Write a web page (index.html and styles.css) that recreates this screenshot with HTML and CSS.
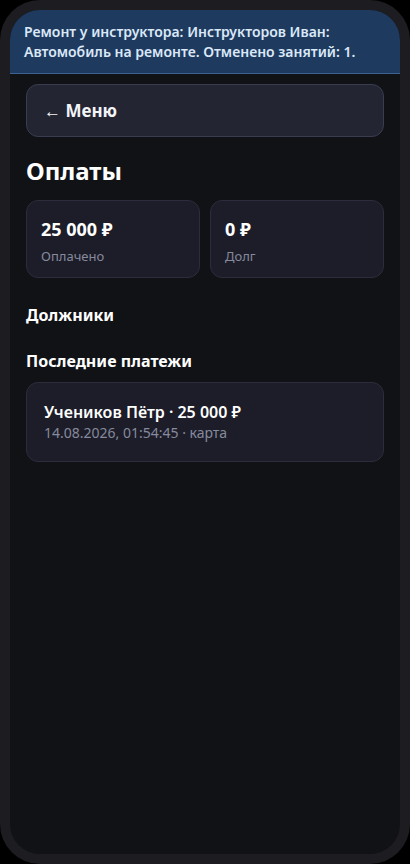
FILE: index.html
```html
<!DOCTYPE html>
<html lang="ru">
<head>
<meta charset="utf-8">
<link rel="stylesheet" href="styles.css">
</head>
<body>
<div class="phone">
  <div class="screen">
    <div class="banner">Ремонт у инструктора: Инструкторов Иван: Автомобиль на ремонте. Отменено занятий: 1.</div>
    <div class="content">
      <button class="menu-btn">← Меню</button>
      <h1 class="title">Оплаты</h1>
      <div class="stats">
        <div class="card stat">
          <div class="stat-value">25 000 ₽</div>
          <div class="stat-label">Оплачено</div>
        </div>
        <div class="card stat">
          <div class="stat-value">0 ₽</div>
          <div class="stat-label">Долг</div>
        </div>
      </div>
      <h2 class="section">Должники</h2>
      <h2 class="section">Последние платежи</h2>
      <div class="card payment">
        <div class="pay-name">Учеников Пётр · 25 000 ₽</div>
        <div class="pay-meta">14.08.2026, 01:54:45 · карта</div>
      </div>
    </div>
  </div>
</div>
</body>
</html>
```
FILE: styles.css
```css
* { box-sizing: border-box; }
html, body { margin: 0; padding: 0; background: #000; }
body {
  font-family: "Noto Sans", "Open Sans", sans-serif;
  color: #f3f4f8;
}
.phone {
  width: 410px;
  height: 864px;
  background: #1c1c21;
  border-radius: 40px;
  padding: 10px;
}
.screen {
  height: 100%;
  background: #111216;
  border-radius: 30px;
  overflow: hidden;
}
.banner {
  background: #1e3a5f;
  border-bottom: 1px solid #3b6391;
  color: #dbe8f8;
  font-size: 14px;
  font-weight: 600;
  line-height: 20px;
  padding: 12px 14px 11px;
}
.content {
  padding: 10px 16px;
  display: flex;
  flex-direction: column;
}
.menu-btn {
  font-family: inherit;
  text-align: left;
  height: 53px;
  background: #232533;
  border: 1px solid #3a3d50;
  border-radius: 12px;
  color: #f3f4f8;
  font-size: 17px;
  font-weight: 700;
  padding: 0 17px;
}
.title {
  font-size: 24px;
  font-weight: 700;
  margin: 19px 0 14px;
  line-height: 30px;
  color: #fff;
}
.stats {
  display: grid;
  grid-template-columns: 1fr 1fr;
  gap: 10px;
}
.card {
  background: #1c1d28;
  border: 1px solid #2b2d3c;
  border-radius: 12px;
}
.stat {
  padding: 16px 14px 12px;
}
.stat-value {
  font-size: 18px;
  font-weight: 700;
  line-height: 24px;
  color: #fff;
}
.stat-label {
  font-size: 13px;
  color: #868a9e;
  margin-top: 6px;
  line-height: 18px;
}
.section {
  font-size: 16px;
  font-weight: 700;
  margin: 26px 0 0;
  line-height: 22px;
  color: #fff;
}
.section + .section { margin-top: 24px; }
.payment {
  margin-top: 10px;
  padding: 18px 17px 18px;
}
.pay-name {
  font-size: 16px;
  font-weight: 600;
  line-height: 22px;
  color: #fff;
}
.pay-meta {
  font-size: 14px;
  color: #868a9e;
  line-height: 20px;
}
```
